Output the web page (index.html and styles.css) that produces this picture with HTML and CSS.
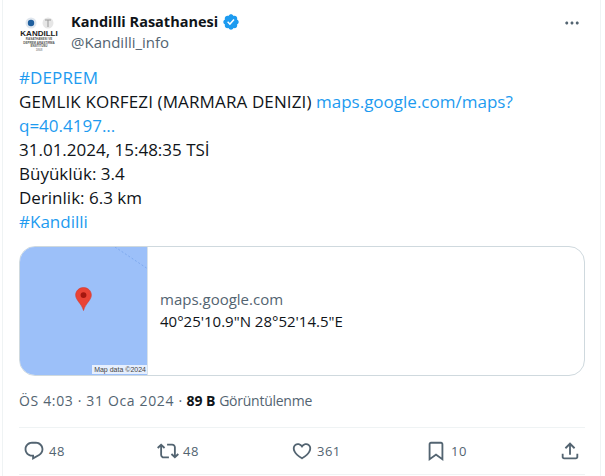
FILE: index.html
```html
<!DOCTYPE html>
<html lang="tr">
<head>
<meta charset="utf-8">
<title>Kandilli Rasathanesi</title>
<link rel="stylesheet" href="styles.css">
</head>
<body>
<article class="tweet">
  <header class="head">
    <div class="avatar">
      <svg class="crest" viewBox="0 0 36 12" width="36" height="12">
        <circle cx="10" cy="6" r="5.500" fill="#dfe6ee"/>
        <circle cx="10" cy="6" r="3.200" fill="#1f5f9e"/>
        <circle cx="27" cy="6" r="5.500" fill="#e6e6e6"/>
        <path d="M24 3h6M27 3v7" stroke="#999" stroke-width="1"/>
      </svg>
      <span class="av-title">KANDILLI</span>
      <span class="av-sub">RASATHANESI VE<br>DEPREM ARAŞTIRMA<br>ENSTİTÜSÜ</span>
      <span class="av-year">1868</span>
    </div>
    <div class="who">
      <div class="name-row">
        <span class="name">Kandilli Rasathanesi</span>
        <svg class="badge" viewBox="0 0 24 24"><path d="M22.25 12c0-1.43-.88-2.67-2.19-3.34.46-1.39.2-2.9-.81-3.91s-2.52-1.27-3.91-.81c-.66-1.31-1.91-2.19-3.34-2.19s-2.67.88-3.33 2.19c-1.4-.46-2.91-.2-3.92.81s-1.26 2.52-.8 3.91c-1.31.67-2.2 1.91-2.2 3.34s.89 2.67 2.2 3.34c-.46 1.39-.21 2.9.8 3.91s2.52 1.26 3.91.81c.67 1.31 1.91 2.19 3.34 2.19s2.68-.88 3.34-2.19c1.39.45 2.9.2 3.91-.81s1.27-2.52.81-3.91c1.31-.67 2.19-1.91 2.19-3.34zm-11.71 4.2L6.8 12.46l1.41-1.42 2.26 2.26 4.8-5.23 1.47 1.36-6.2 6.77z"/></svg>
      </div>
      <div class="handle">@Kandilli_info</div>
    </div>
    <svg class="more" viewBox="0 0 24 24"><path d="M3 12c0-1.1.9-2 2-2s2 .9 2 2-.9 2-2 2-2-.9-2-2zm9 2c1.1 0 2-.9 2-2s-.9-2-2-2-2 .9-2 2 .9 2 2 2zm7 0c1.1 0 2-.9 2-2s-.9-2-2-2-2 .9-2 2 .9 2 2 2z"/></svg>
  </header>

  <div class="body">
    <div class="link caps">#DEPREM</div>
    <div><span class="caps">GEMLIK KORFEZI (MARMARA DENIZI)</span> <span class="link">maps.google.com/maps?<br>q=40.4197...</span></div>
    <div>31.01.2024, 15:48:35 TSİ</div>
    <div>Büyüklük: 3.4</div>
    <div>Derinlik: 6.3 km</div>
    <div class="link">#Kandilli</div>
  </div>

  <div class="card">
    <div class="map">
      <svg class="road" viewBox="0 0 128 40" width="128" height="40"><path d="M95 0L128 22" fill="none" stroke="#7fa9ee" stroke-width="1" stroke-dasharray="2 2"/></svg>
      <svg class="pin" viewBox="0 0 18 26" width="17" height="24">
        <path d="M9 .5C4.3.5.5 4.2.5 8.8c0 5.7 6.2 8.600 8.500 16.700C11.300 17.400 17.500 14.500 17.500 8.800 17.500 4.200 13.700.5 9 .5z" fill="#ea4335" stroke="#d33426" stroke-width=".6"/>
        <circle cx="9" cy="8.800" r="3.200" fill="#a5170f"/>
      </svg>
      <span class="attr">Map data ©2024</span>
    </div>
    <div class="card-info">
      <div class="domain">maps.google.com</div>
      <div class="coords">40°25'10.9"N 28°52'14.5"E</div>
    </div>
  </div>

  <div class="meta"><span class="date">ÖS 4:03 · 31 Oca 2024 ·</span> <b>89 B</b> <span class="views">Görüntülenme</span></div>

  <div class="actions">
    <div class="action">
      <svg viewBox="0 0 24 24"><path d="M1.751 10c0-4.42 3.584-8 8.005-8h4.366c4.490 0 8.129 3.640 8.129 8.130 0 2.960-1.607 5.680-4.196 7.110l-8.054 4.460v-3.690h-.067c-4.490.1-8.183-3.510-8.183-8.010zm8.005-6c-3.317 0-6.005 2.690-6.005 6 0 3.370 2.770 6.080 6.138 6.010l.351-.01h1.761v2.300l5.087-2.810c1.951-1.080 3.163-3.130 3.163-5.360 0-3.390-2.744-6.130-6.129-6.130H9.756z"/></svg>
      <span>48</span>
    </div>
    <div class="action">
      <svg viewBox="0 0 24 24"><path d="M4.500 3.880l4.432 4.140-1.364 1.460L5.500 7.550V16c0 1.100.896 2 2 2H13v2H7.500c-2.209 0-4-1.790-4-4V7.550L1.432 9.480.068 8.020 4.500 3.880zM16.500 6H11V4h5.500c2.209 0 4 1.790 4 4v8.450l2.068-1.930 1.364 1.460-4.432 4.140-4.432-4.140 1.364-1.460 2.068 1.930V8c0-1.100-.896-2-2-2z"/></svg>
      <span>48</span>
    </div>
    <div class="action">
      <svg viewBox="0 0 24 24"><path d="M16.697 5.500c-1.222-.06-2.679.51-3.890 2.160l-.805 1.090-.806-1.090C9.984 6.010 8.526 5.440 7.304 5.500c-1.243.07-2.349.78-2.910 1.910-.552 1.120-.633 2.780.479 4.820 1.074 1.970 3.257 4.270 7.129 6.610 3.870-2.340 6.052-4.640 7.126-6.610 1.111-2.040 1.030-3.700.477-4.820-.561-1.130-1.666-1.840-2.908-1.910zm4.187 7.690c-1.351 2.480-4.001 5.120-8.379 7.670l-.503.3-.504-.3c-4.379-2.550-7.029-5.190-8.382-7.670-1.360-2.500-1.410-4.860-.514-6.670.887-1.790 2.647-2.910 4.601-3.010 1.651-.09 3.368.56 4.798 2.010 1.429-1.450 3.146-2.100 4.796-2.010 1.954.1 3.714 1.220 4.601 3.010.896 1.810.846 4.170-.514 6.670z"/></svg>
      <span>361</span>
    </div>
    <div class="action">
      <svg viewBox="0 0 24 24"><path d="M4 4.500C4 3.120 5.119 2 6.500 2h11C18.881 2 20 3.120 20 4.500v18.440l-8-5.710-8 5.710V4.500zM6.500 4c-.276 0-.5.220-.5.500v14.560l6-4.290 6 4.290V4.500c0-.28-.224-.5-.5-.5h-11z"/></svg>
      <span>10</span>
    </div>
    <div class="action">
      <svg viewBox="0 0 24 24"><path d="M12 2.590l5.700 5.700-1.410 1.420L13 6.410V16h-2V6.410l-3.300 3.300-1.410-1.420L12 2.590zM21 15l-.02 3.510c0 1.380-1.120 2.490-2.500 2.490H5.500C4.110 21 3 19.880 3 18.500V15h2v3.500c0 .28.220.5.500.5h12.980c.28 0 .5-.22.5-.5L19 15h2z"/></svg>
    </div>
  </div>
</article>
</body>
</html>
```
FILE: styles.css
```css
* { box-sizing: border-box; }
html, body { margin: 0; padding: 0; background: #fff; }
body {
  height: 476px;
  overflow: hidden;
  font-family: "Open Sans", "Noto Sans", sans-serif;
  color: #0f1419;
}
.tweet {
  width: 599px;
  height: 476px;
  margin-left: 2px;
  padding: 0 15px 0 16px;
  border-left: 1px solid #eff3f4;
  border-right: 1px solid #eff3f4;
}
.head {
  display: flex;
  align-items: flex-start;
  padding-top: 12px;
  height: 66px;
}
.avatar {
  width: 40px;
  height: 40px;
  margin-right: 12px;
  display: flex;
  flex-direction: column;
  align-items: center;
  overflow: hidden;
  color: #333;
  font-family: "Liberation Sans", sans-serif;
  text-align: center;
  padding-top: 5px;
  flex: none;
}
.crest { display: block; flex: none; }
.av-title { font-size: 8px; font-weight: 700; line-height: 9px; color: #222; }
.av-sub { font-size: 3px; line-height: 3.500px; font-weight: 700; color: #555; white-space: nowrap; }
.av-year { font-size: 3px; line-height: 3.500px; color: #666; }
.who { flex: 1; }
.name-row { display: flex; align-items: center; height: 20px; }
.name { font-size: 14.500px; font-weight: 700; line-height: 20px; }
.badge { width: 18px; height: 18px; margin-left: 4px; fill: #1d9bf0; }
.handle { font-size: 15px; line-height: 20px; color: #536471; }
.more { width: 18px; height: 18px; fill: #536471; margin: 2px 4px 0 0; }
.body {
  font-size: 17px;
  line-height: 24px;
  height: 180px;
}
.caps { letter-spacing: .12px; }
.link { color: #1d9bf0; }
.card {
  display: flex;
  height: 130px;
  border: 1px solid #cfd9de;
  border-radius: 16px;
  overflow: hidden;
}
.map {
  position: relative;
  width: 128px;
  flex: none;
  background: #9cc0f9;
  border-right: 1px solid #d8e2ea;
}
.road { position: absolute; left: 0; top: 0; }
.pin { position: absolute; left: 55px; top: 40px; }
.attr {
  position: absolute;
  right: 0;
  bottom: 1px;
  padding: 0 1px 0 2px;
  height: 9px;
  background: rgba(255,255,255,.75);
  font-family: "Liberation Sans", sans-serif;
  font-size: 7px;
  line-height: 9px;
  color: #444;
  white-space: nowrap;
}
.card-info {
  flex: 1;
  display: flex;
  flex-direction: column;
  justify-content: center;
  padding: 0 0 3px 12px;
  font-size: 15px;
  line-height: 20px;
}
.domain { color: #536471; margin-bottom: 2px; }
.coords { color: #0f1419; }
.meta {
  height: 52px;
  padding-top: 15px;
  font-size: 14px;
  line-height: 20px;
  color: #536471;
  border-bottom: 1px solid #eff3f4;
}
.date { letter-spacing: .65px; }
.views { letter-spacing: -.25px; }
.meta b { color: #0f1419; font-weight: 700; }
.actions {
  display: grid;
  grid-template-columns: repeat(4, 134px) auto;
  align-items: center;
  height: 47px;
  padding-left: 4px;
  border-bottom: 1px solid #eff3f4;
}
.action { display: flex; align-items: center; gap: 4px; font-size: 13px; letter-spacing: .5px; color: #536471; }
.action svg { width: 22px; height: 22px; fill: #536471; flex: none; }
```
